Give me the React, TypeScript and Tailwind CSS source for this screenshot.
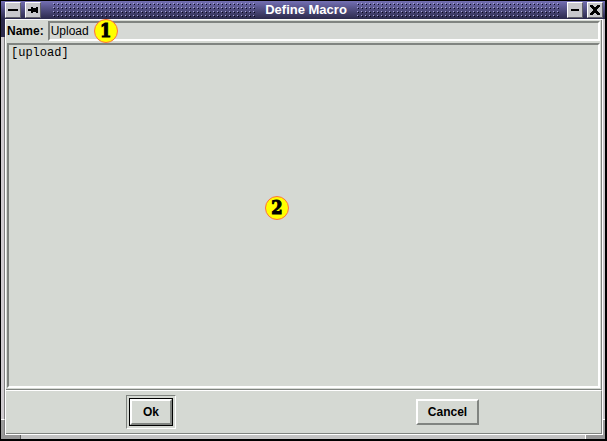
import type { ReactNode } from "react";

function TitleButton({ label, children }: { label: string; children: ReactNode }) {
  return (
    <button
      type="button"
      aria-label={label}
      className="flex h-4 w-4 shrink-0 items-center justify-center border border-t-white border-l-white border-r-[#606068] border-b-[#606068] bg-[#c8c8cc]"
    >
      <svg width="12" height="12" viewBox="0 0 12 12" shapeRendering="crispEdges" fill="#000">
        {children}
      </svg>
    </button>
  );
}

function Dots({ id }: { id: string }) {
  return (
    <svg className="h-4 min-w-0 flex-1" shapeRendering="crispEdges" aria-hidden="true">
      <defs>
        <pattern id={id} width="4" height="4" patternUnits="userSpaceOnUse">
          <rect x="0" y="1" width="1" height="1" fill="#aaa8dc" />
          <rect x="1" y="2" width="1" height="1" fill="#080818" />
        </pattern>
      </defs>
      <rect width="100%" height="100%" fill={`url(#${id})`} />
    </svg>
  );
}

function Badge({ children, className }: { children: ReactNode; className: string }) {
  return (
    <span
      className={`pointer-events-none absolute flex h-6 w-6 items-center justify-center rounded-full border border-[#ff7040] bg-[#ffff00] font-['DejaVu_Serif_Condensed','DejaVu_Serif',serif] text-lg leading-none font-bold [-webkit-text-stroke:1px_black] ${className}`}
    >
      {children}
    </span>
  );
}

export default function App() {
  return (
    <div className="flex min-h-screen flex-col border-t border-r-2 border-b-2 border-l border-black bg-[#c4c4c4] font-['Liberation_Sans',Arial,sans-serif] text-xs text-black">
      <header className="flex h-[18px] items-center gap-1 bg-linear-to-b from-[#7470b4] to-[#2c2a4c] pr-0.5 pl-1">
        <TitleButton label="Window menu">
          <rect x="1" y="5" width="10" height="2" />
        </TitleButton>
        <TitleButton label="Pin window">
          <rect x="1" y="5" width="3" height="2" />
          <rect x="4" y="3" width="2" height="6" />
          <rect x="6" y="4" width="3" height="4" />
          <rect x="9" y="3" width="2" height="6" />
        </TitleButton>
        <div className="flex min-w-0 flex-1 items-center gap-2.5 pr-1 pl-2">
          <Dots id="dots-left" />
          <h1 className="text-[13px] leading-4 font-bold text-white">Define Macro</h1>
          <Dots id="dots-right" />
        </div>
        <TitleButton label="Minimize">
          <rect x="2" y="5" width="8" height="2" />
        </TitleButton>
        <TitleButton label="Close">
          <path d="M1 1h3v1h1v1h2v-1h1v-1h3v2h-1v1h-1v1h-1v2h1v1h1v1h1v2h-3v-1h-1v-1h-2v1h-1v1h-3v-2h1v-1h1v-1h1v-2h-1v-1h-1v-1h-1z" />
        </TitleButton>
      </header>

      <div className="flex flex-1">
        <div className="flex w-1 flex-col">
          <div className="h-[18px] bg-[#2c2a4c]" />
          <div className="flex-1 border-r border-[#808080] bg-[#d0ccd0]" />
          <div className="h-4 border-t border-r border-t-white border-r-[#808080] bg-[#9c9c9c]" />
        </div>
        <form
          className="flex min-w-0 flex-1 flex-col border border-white bg-[#d5d9d3]"
          onSubmit={(e) => e.preventDefault()}
        >
          <div className="flex flex-1 flex-col gap-0.5 border-r border-b border-[#808480] p-px">
            <div className="flex items-center gap-1">
              <label htmlFor="name" className="font-bold">
                Name:
              </label>
              <div className="relative flex-1">
                <input
                  id="name"
                  defaultValue="Upload"
                  className="block h-5 w-full border-2 border-t-[#808480] border-r-white border-b-white border-l-[#808480] bg-[#d6d9d5] px-px outline-none"
                />
                <Badge className="-top-0.5 left-[46px]">1</Badge>
              </div>
            </div>
            <div className="relative flex flex-1">
              <textarea
                aria-label="Macro text"
                defaultValue="[upload]"
                className="w-full flex-1 resize-none border-2 border-t-[#808480] border-r-white border-b-white border-l-[#808480] bg-[#d5d9d3] px-0.5 font-['Liberation_Mono',monospace] text-xs leading-4 outline-none"
              />
              <Badge className="top-[153px] left-[258px]">2</Badge>
            </div>
          </div>
          <div className="flex items-center justify-around border-t border-r border-b border-t-white border-r-[#808480] border-b-[#808480] py-1 pr-0.5">
            <div className="border border-t-[#808480] border-r-white border-b-white border-l-[#808480] p-0.5">
              <button type="submit" className="block border border-black font-bold">
                <span className="block w-[42px] border-2 border-t-white border-r-[#808480] border-b-[#808480] border-l-white py-0.5 leading-[18px]">
                  Ok
                </span>
              </button>
            </div>
            <button
              type="button"
              className="h-[26px] w-[63px] border-2 border-t-white border-r-[#808480] border-b-[#808480] border-l-white font-bold"
            >
              Cancel
            </button>
          </div>
        </form>
        <div className="flex w-0.5 flex-col">
          <div className="flex-1 bg-[#c8c4c8]" />
          <div className="h-4 border-t border-white bg-[#9c9c9c]" />
        </div>
      </div>

      <footer className="flex h-1">
        <div className="w-5 border-r border-[#606060] bg-[#989898]" />
        <div className="flex-1 bg-[#c4c4c4]" />
        <div className="w-5 border-l border-white bg-[#989898]" />
      </footer>
    </div>
  );
}
